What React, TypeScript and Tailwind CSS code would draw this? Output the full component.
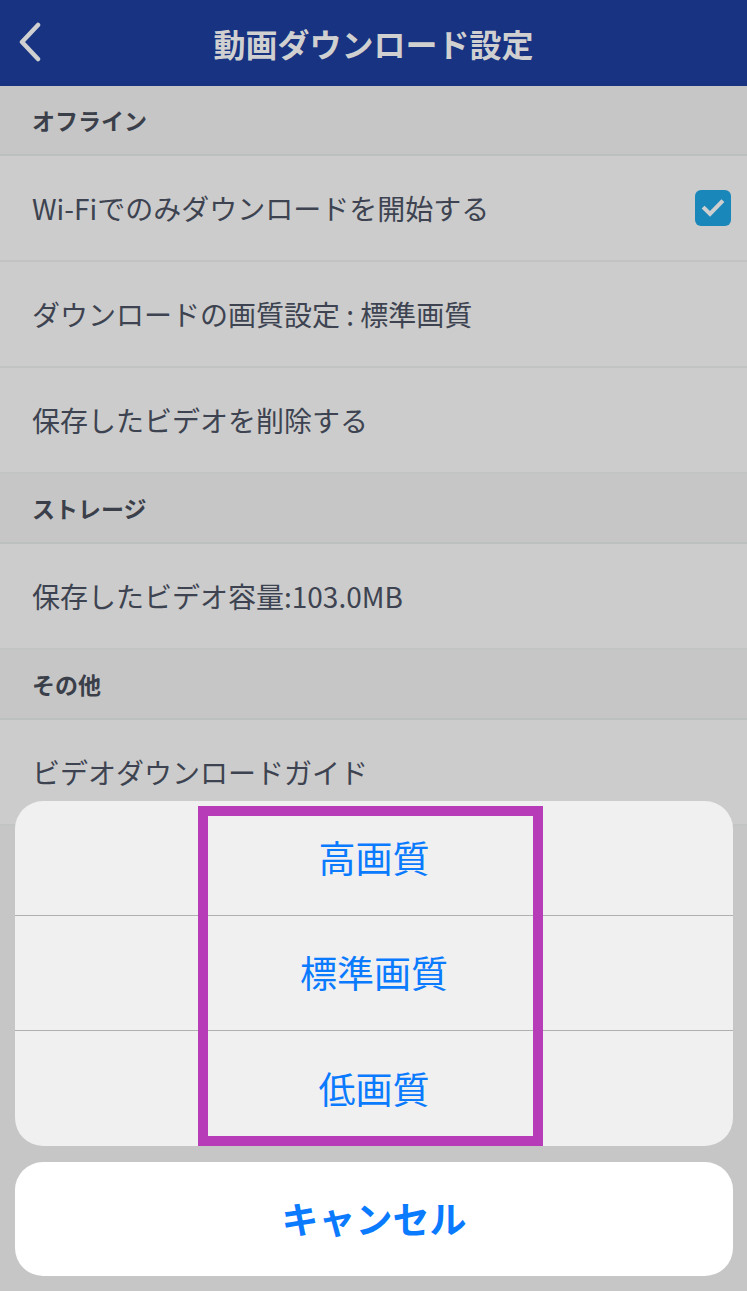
import React from 'react';

const jp = { fontFamily: '"Noto Sans CJK JP", "Noto Sans", sans-serif' };

const SectionHeader: React.FC<{ title: string }> = ({ title }) => (
  <div className="h-[70px] flex items-center px-8 bg-[#c6c6c6] border-b-2 border-[#bcc0bf]">
    <span className="text-[23px] font-bold text-[#3a3f4a]">{title}</span>
  </div>
);

const Row: React.FC<{ label: string; checked?: boolean }> = ({ label, checked }) => (
  <div className="h-[106px] flex items-center justify-between pl-8 pr-4 bg-[#cccccc] border-b-2 border-[#c2c4c3]">
    <span className="text-[28px] text-[#3d4350]">{label}</span>
    {checked && (
      <div className="w-9 h-9 rounded-md bg-[#1a87bb] flex items-center justify-center">
        <svg width="24" height="24" viewBox="0 0 24 24" fill="none">
          <path d="M3.5 12.5l5.5 5.5 11.5-12" stroke="#cfcfcf" strokeWidth="4" strokeLinecap="square" />
        </svg>
      </div>
    )}
  </div>
);

const SheetItem: React.FC<{ label: string; last?: boolean }> = ({ label, last }) => (
  <div className={`h-[115px] flex items-center justify-center ${last ? '' : 'border-b border-[#b0b0b0]'}`}>
    <span className="text-[37px] text-[#0a7aff]">{label}</span>
  </div>
);

export default function App() {
  return (
    <div className="relative w-[747px] h-[1291px] overflow-hidden bg-[#c6c6c6]" style={jp}>
      {/* Header */}
      <div className="h-[86px] bg-[#173381] flex items-center relative">
        <svg className="absolute left-[16px] top-[22px]" width="28" height="40" viewBox="0 0 28 40" fill="none">
          <path d="M22 3L6 20l16 17" stroke="#d0d0d0" strokeWidth="4.5" strokeLinecap="round" strokeLinejoin="round" />
        </svg>
        <h1 className="flex-1 text-center text-[32px] font-bold text-[#d0d0d0]">動画ダウンロード設定</h1>
      </div>

      <SectionHeader title="オフライン" />
      <Row label="Wi-Fiでのみダウンロードを開始する" checked />
      <Row label="ダウンロードの画質設定 : 標準画質" />
      <Row label="保存したビデオを削除する" />
      <SectionHeader title="ストレージ" />
      <Row label="保存したビデオ容量:103.0MB" />
      <SectionHeader title="その他" />
      <Row label="ビデオダウンロードガイド" />

      {/* Action sheet */}
      <div className="absolute left-[15px] right-[14px] top-[801px] flex flex-col gap-4">
        <div className="bg-[#f0f0f0] rounded-[28px] flex flex-col overflow-hidden">
          <SheetItem label="高画質" />
          <SheetItem label="標準画質" />
          <SheetItem label="低画質" last />
        </div>
        <div className="h-[114px] bg-white rounded-[28px] flex items-center justify-center">
          <span className="text-[37px] font-bold text-[#0a7aff]">キャンセル</span>
        </div>
      </div>

      {/* Highlight annotation */}
      <div className="absolute left-[198px] top-[806px] w-[345px] h-[340px] border-[10px] border-[#b63db7]" />
    </div>
  );
}
